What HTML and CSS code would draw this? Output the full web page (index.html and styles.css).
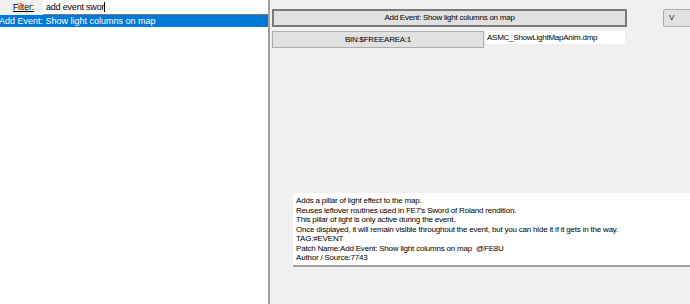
FILE: index.html
```html
<!DOCTYPE html>
<html lang="en">
<head>
    <meta charset="UTF-8">
    <title>Patch Manager</title>
<link rel="stylesheet" href="styles.css">
</head>
<body>
    <div class="app">
        <div class="left">
            <div class="filter-row">
                <div class="filter-label"><u>Filter:</u></div>
                <div class="filter-input">add event swor<span class="caret"></span></div>
            </div>
            <div class="list">
                <div class="list-item selected">Add Event: Show light columns on map</div>
            </div>
        </div>
        <div class="right">
            <div class="row top-row">
                <div class="btn btn-default wide">Add Event: Show light columns on map</div>
                <div class="btn btn-side">V</div>
            </div>
            <div class="row">
                <div class="btn bin">BIN:$FREEAREA:1</div>
                <div class="field">ASMC_ShowLightMapAnim.dmp</div>
            </div>
            <div class="desc">
                <div>Adds a pillar of light effect to the map.</div>
                <div>Reuses leftover routines used in FE7's Sword of Roland rendition.</div>
                <div>This pillar of light is only active during the event.</div>
                <div>Once displayed, it will remain visible throughout the event, but you can hide it if it gets in the way.</div>
                <div>TAG:#EVENT</div>
                <div>Patch Name:Add Event: Show light columns on map&nbsp;&nbsp;@FE8U</div>
                <div>Author / Source:7743</div>
            </div>
        </div>
    </div>
</body>
</html>
```

FILE: styles.css
```css
* {
    box-sizing: border-box;
}

body {
    margin: 0;
    font-family: "Liberation Sans", Arial, sans-serif;
    font-size: 8px;
    color: #000;
    background-color: #f0f0f0;
}

.app {
    display: flex;
    width: 690px;
    height: 304px;
    overflow: hidden;
}

.left {
    width: 270px;
    flex-shrink: 0;
    background-color: #fff;
    border-right: 2px solid #a0a0a0;
}

.filter-row {
    display: flex;
    height: 15px;
}

.filter-label {
    width: 43px;
    background-color: #f0f0f0;
    text-align: center;
    line-height: 15px;
    padding-left: 4px;
    font-size: 8.5px;
}

.filter-input {
    flex: 1;
    background-color: #fff;
    border-bottom: 1px solid #7a7a7a;
    padding-left: 3px;
    font-size: 9px;
    line-height: 14px;
    letter-spacing: -0.2px;
}

.caret {
    display: inline-block;
    width: 1px;
    height: 10px;
    background-color: #000;
    vertical-align: -2px;
}

.list-item {
    height: 12px;
    line-height: 12px;
    font-size: 9px;
    white-space: nowrap;
    text-indent: -1px;
}

.list-item.selected {
    background-color: #0078d7;
    color: #fff;
}

.right {
    flex: 1;
    padding: 9px 0 0 2px;
    overflow: hidden;
}

.row {
    display: flex;
    align-items: flex-start;
    gap: 2px;
}

.top-row {
    gap: 36px;
    margin-bottom: 4px;
}

.btn {
    flex-shrink: 0;
    background-color: #e1e1e1;
    border: 1px solid #adadad;
    text-align: center;
    white-space: nowrap;
    letter-spacing: -0.25px;
}

.btn-default {
    border: 2px solid #7a7a7a;
}

.wide {
    width: 355px;
    height: 18px;
    line-height: 14px;
}

.btn-side {
    width: 70px;
    height: 18px;
    line-height: 16px;
    border-radius: 2px;
    color: #2a2414;
    text-align: left;
    padding-left: 5px;
}

.bin {
    width: 212px;
    height: 17px;
    line-height: 16px;
}

.field {
    width: 139px;
    height: 13px;
    line-height: 13px;
    padding-left: 1px;
    background-color: #fff;
    white-space: nowrap;
    letter-spacing: -0.25px;
}

.desc {
    margin: 145px 0 0 21px;
    height: 74px;
    padding: 3px 0 0 3px;
    background-color: #fff;
    border-bottom: 2px solid #a0a0a0;
    line-height: 9.5px;
    white-space: nowrap;
    letter-spacing: -0.2px;
}
```
